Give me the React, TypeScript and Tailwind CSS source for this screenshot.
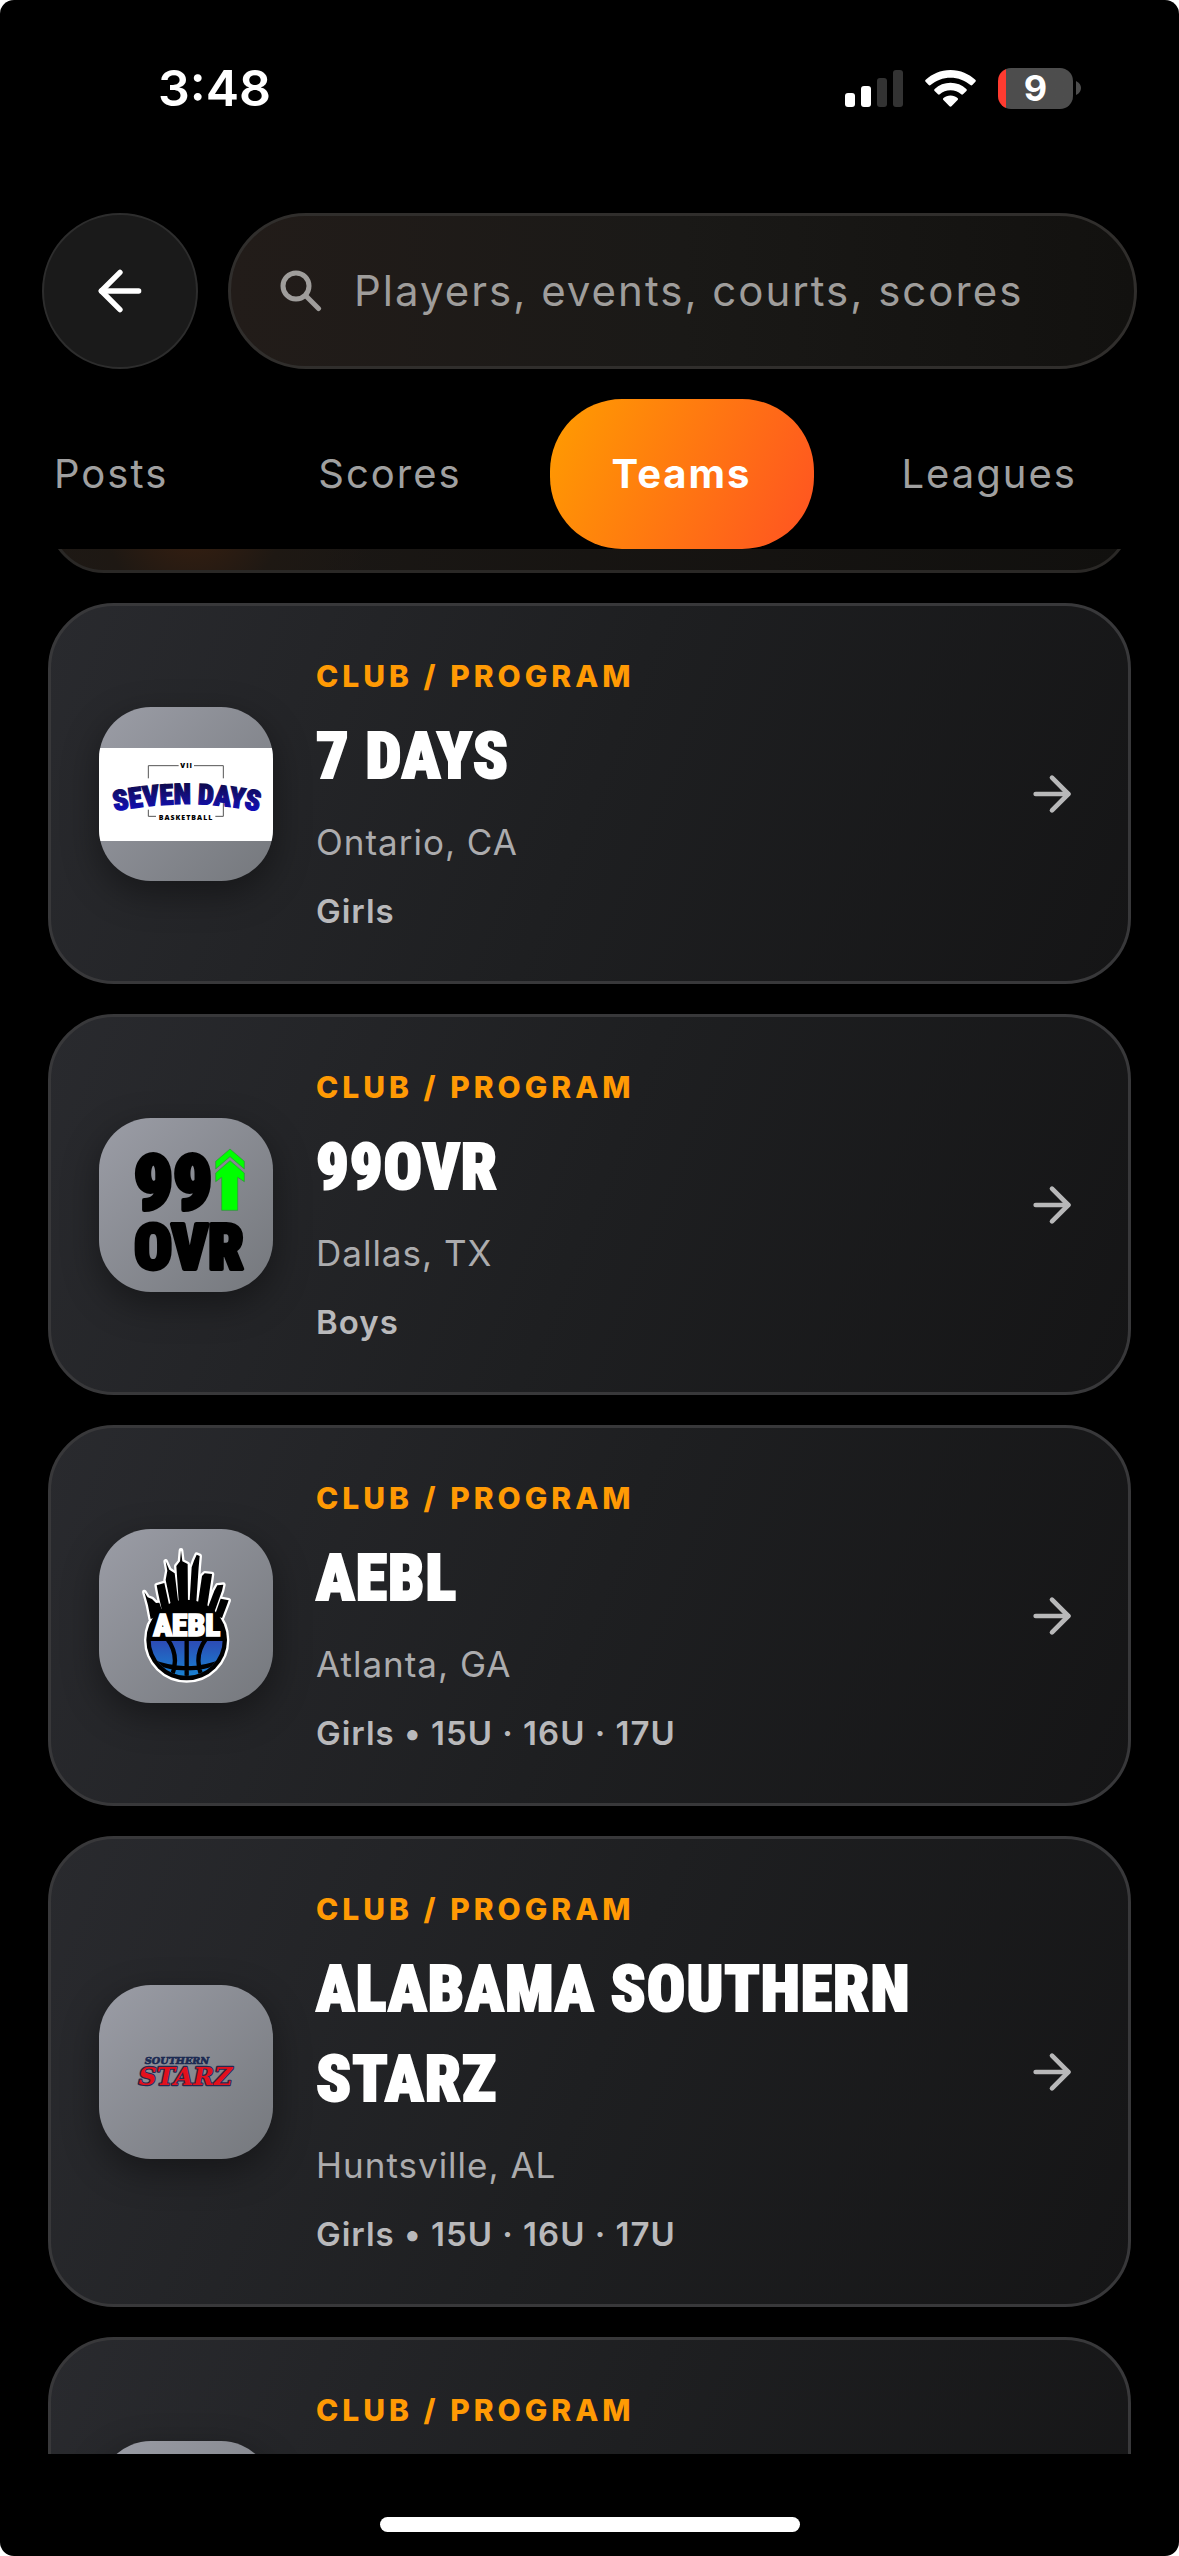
import type { ReactNode } from 'react';
import { ArrowLeft, ArrowRight } from 'lucide-react';

type Team = {
  name: string;
  location: string;
  detail: string;
  logo: ReactNode;
};

function SevenDaysLogo() {
  return (
    <svg viewBox="57 48 522 522" className="size-full" role="img" aria-label="Seven Days Basketball">
      <defs>
        <linearGradient id="seven-blue" x1="0" y1="0" x2="0" y2="1">
          <stop offset="0" stopColor="#0b0838" />
          <stop offset="0.5" stopColor="#140f86" />
          <stop offset="1" stopColor="#0c0cd6" />
        </linearGradient>
        <path id="seven-arc" d="M90 364 Q317 314 550 364" />
      </defs>
      <rect x="57" y="171" width="522" height="279" fill="#fff" />
      <path d="M296 224H205V262M342 224H430V262M205 356V376H228M406 376H430V336" fill="none" stroke="#555" strokeWidth="3" />
      <text x="320" y="232" textAnchor="middle" fontFamily="Open Sans, sans-serif" fontWeight="800" fontSize="21" letterSpacing="3">VII</text>
      <text fontFamily="Roboto Condensed, Roboto, sans-serif" fontWeight="900" fontSize="85" fill="url(#seven-blue)" stroke="url(#seven-blue)" strokeWidth="4">
        <textPath href="#seven-arc" startOffset="50%" textAnchor="middle">SEVEN DAYS</textPath>
      </text>
      <text x="318" y="387" textAnchor="middle" fontFamily="Open Sans, sans-serif" fontWeight="800" fontSize="21" letterSpacing="3">BASKETBALL</text>
    </svg>
  );
}

function NinetyNineLogo() {
  return (
    <svg viewBox="57 52 522 522" className="size-full" role="img" aria-label="99 OVR">
      <g fontFamily="Roboto Condensed, Roboto, sans-serif" fontWeight="900" fill="#000" stroke="#000" strokeWidth="12" strokeLinejoin="round">
        <text x="279" y="324" textAnchor="middle" fontSize="230">99</text>
        <text x="327" y="506" textAnchor="middle" fontSize="188">OVR</text>
      </g>
      <path d="M450 145L493 182V205L450 168L407 205V182Z" fill="#0f0" stroke="#2f8f3a" strokeWidth="2" />
      <path d="M450 180L493 217V243L473 230V329H425V230L407 243V217Z" fill="#0f0" stroke="#2f8f3a" strokeWidth="2" />
    </svg>
  );
}

function AeblLogo() {
  const shape = (
    <>
      <circle cx="320" cy="388" r="121" />
      <path d="M212 325L204 284L198 262L193 244L203 260L216 265L228 277L238 276L250 310Z" />
      <path d="M246 300L235 250L230 224L253 217L270 295Z" />
      <path d="M274 290L257 208L262 180L257 152L268 177L284 188L296 285Z" />
      <path d="M297 285L289 166L300 152L303 119L307 152L323 160L324 285Z" />
      <path d="M328 285L335 170L342 150L350 132L359 136L356 170L348 288Z" />
      <path d="M352 290L366 196L374 188L396 190L394 205L380 298Z" />
      <path d="M380 300L403 240L412 224L430 222L426 240L402 308Z" />
      <path d="M404 315L422 264L446 269L440 285L426 322Z" />
    </>
  );
  return (
    <svg viewBox="57 55 522 522" className="size-full" role="img" aria-label="AEBL">
      <defs>
        <linearGradient id="aebl-blue" x1="0" y1="0" x2="0" y2="1">
          <stop offset="0" stopColor="#2c4bb4" />
          <stop offset="1" stopColor="#168ad6" />
        </linearGradient>
        <clipPath id="aebl-ball">
          <circle cx="320" cy="388" r="108" />
        </clipPath>
      </defs>
      <g fill="#fff" stroke="#fff" strokeWidth="14" strokeLinejoin="round">{shape}</g>
      <g fill="#000">{shape}</g>
      <g clipPath="url(#aebl-ball)">
        <rect x="200" y="391" width="240" height="120" fill="url(#aebl-blue)" />
        <path d="M320 380V510M262 385Q302 438 272 505M378 385Q338 438 368 505M205 448Q320 498 435 448" fill="none" stroke="#000" strokeWidth="13" />
      </g>
      <text x="320" y="376" textAnchor="middle" fontFamily="Roboto Condensed, Roboto, sans-serif" fontWeight="900" fontSize="94" fill="#fff" stroke="#fff" strokeWidth="5">AEBL</text>
    </svg>
  );
}

function StarzLogo() {
  return (
    <svg viewBox="57 43 522 522" className="size-full" role="img" aria-label="Southern Starz">
      <g fontFamily="DejaVu Serif, serif" fontWeight="700" fontStyle="italic">
        <text x="291" y="280" textAnchor="middle" fontSize="29" fill="#1b2a52" stroke="#1b2a52" strokeWidth="2">SOUTHERN</text>
        <text x="316" y="344" textAnchor="middle" fontSize="75" fill="#e3101c" stroke="#26284f" strokeWidth="7" strokeLinejoin="round" paintOrder="stroke">STARZ</text>
      </g>
    </svg>
  );
}

const teams: Team[] = [
  { name: '7 DAYS', location: 'Ontario, CA', detail: 'Girls', logo: <SevenDaysLogo /> },
  { name: '99OVR', location: 'Dallas, TX', detail: 'Boys', logo: <NinetyNineLogo /> },
  { name: 'AEBL', location: 'Atlanta, GA', detail: 'Girls • 15U · 16U · 17U', logo: <AeblLogo /> },
  { name: 'ALABAMA SOUTHERN STARZ', location: 'Huntsville, AL', detail: 'Girls • 15U · 16U · 17U', logo: <StarzLogo /> },
  { name: '\u00a0', location: '\u00a0', detail: '\u00a0', logo: null },
];

const tabs = ['Posts', 'Scores', 'Teams', 'Leagues'];

function StatusBar() {
  return (
    <div className="flex h-44 shrink-0 items-center justify-between pl-[158px] pr-[98px]">
      <span className="text-[50px] font-semibold leading-none">3:48</span>
      <div className="flex items-center gap-[22px]">
        <svg width="58" height="38" viewBox="0 0 58 38" aria-hidden="true">
          <rect x="0" y="24" width="10" height="14" rx="3" fill="#fff" />
          <rect x="16" y="17" width="10" height="21" rx="3" fill="#fff" />
          <rect x="32" y="9" width="10" height="29" rx="3" fill="#333" />
          <rect x="48" y="1" width="10" height="37" rx="3" fill="#333" />
        </svg>
        <svg width="51" height="38" viewBox="0 0 51 38" aria-hidden="true" fill="#fff">
          <path d="M25.500 1C35.500 1 44 5 50.300 10.800C51 11.500 51 12.200 50.400 12.800L47.300 16C46.700 16.600 46 16.600 45.400 16C40 11.300 33 8.700 25.500 8.700S11 11.300 5.600 16C5 16.600 4.300 16.600 3.700 16L.6 12.800C0 12.200 0 11.500.7 10.800C7 5 15.500 1 25.500 1Z" />
          <path d="M25.500 13.800C31.500 13.800 37 16 41.300 19.900C42 20.500 42 21.300 41.400 21.900L38 25.200C37.400 25.800 36.800 25.800 36.200 25.200C33.300 22.800 29.600 21.300 25.500 21.300S17.700 22.800 14.800 25.200C14.200 25.800 13.600 25.800 13 25.200L9.600 21.900C9 21.300 9 20.500 9.700 19.900C14 16 19.500 13.800 25.500 13.800Z" />
          <path d="M25.500 26.600C28.300 26.600 30.700 27.500 32.500 29C33.200 29.600 33.200 30.300 32.600 30.900L26.500 37.200C25.900 37.800 25.100 37.800 24.500 37.200L18.400 30.900C17.800 30.300 17.800 29.600 18.500 29C20.300 27.500 22.700 26.600 25.500 26.600Z" />
        </svg>
        <div className="flex items-center gap-[3px]">
          <div className="flex h-[41px] w-[75px] items-center justify-center rounded-[13px] bg-linear-to-r from-[#ff3b30] from-10% to-[#4d4d4d] to-10% text-4xl font-bold leading-none">
            9
          </div>
          <svg width="5" height="14" viewBox="0 0 5 14" aria-hidden="true">
            <path d="M0 0Q5 2.500 5 7T0 14Z" fill="#4d4d4d" />
          </svg>
        </div>
      </div>
    </div>
  );
}

function SearchHeader() {
  return (
    <header className="flex shrink-0 items-center gap-[30px] px-[42px] pt-[37px]">
      <button
        type="button"
        aria-label="Back"
        className="flex size-[156px] shrink-0 items-center justify-center rounded-full border-2 border-[#2d2d2d] bg-[#1a1a1a]"
      >
        <ArrowLeft size={64} />
      </button>
      <label className="flex h-[156px] min-w-0 flex-1 items-center gap-8 rounded-full border-[3px] border-[#302e2c] bg-linear-to-r from-[#221c19] via-[#1a1917] to-[#12110f] px-[49px]">
        <svg width="42" height="42" viewBox="0 0 42 42" aria-hidden="true" fill="none" stroke="#9f9d9b" strokeWidth="5" strokeLinecap="round">
          <circle cx="16" cy="16" r="13" />
          <path d="M26 26L38.500 38.500" />
        </svg>
        <input
          type="search"
          aria-label="Search"
          placeholder="Players, events, courts, scores"
          className="min-w-0 flex-1 bg-transparent pb-0.5 text-[42px] tracking-[2px] outline-none placeholder:text-[#9f9d9b] placeholder:opacity-100"
        />
      </label>
    </header>
  );
}

function TeamCard({ team }: { team: Team }) {
  return (
    <a
      href="#team"
      className="flex shrink-0 items-center rounded-[66px] border-[3px] border-[#38383a] bg-linear-[112deg] from-[#292a2e] via-[#1e1f21] to-[#151516] p-12"
    >
      <div className="size-[174px] shrink-0 overflow-hidden rounded-[52px] bg-linear-to-br from-[#9b9da6] to-[#75787d] shadow-[0_12px_36px_rgba(0,0,0,0.4)]">
        {team.logo}
      </div>
      <div className="ml-[43px] min-w-0 flex-1 pr-10">
        <p className="text-[30px] font-extrabold leading-[44px] tracking-[4px] text-[#ff9a04]">CLUB / PROGRAM</p>
        <h2 className="mt-3.5 font-['Roboto_Condensed',Roboto,sans-serif] text-[64px] font-black leading-[90px] tracking-[1px] text-white [-webkit-text-stroke:2px_white]">
          {team.name}
        </h2>
        <p className="mt-3.5 text-[35px] leading-[53px] tracking-[1px] text-[#acacae]">{team.location}</p>
        <p className="mt-5 text-[33px] font-semibold leading-[44px] tracking-[1px] text-[#b9b9bb]">{team.detail}</p>
      </div>
      <ArrowRight size={56} className="shrink-0 text-[#b8b8b9]" aria-hidden="true" />
    </a>
  );
}

export default function App() {
  return (
    <div className="h-screen bg-white">
      <div className="flex h-full flex-col overflow-hidden rounded-[14px] bg-black font-['Inter',sans-serif] text-white">
        <StatusBar />
        <SearchHeader />
        <nav className="-ml-2 mt-[30px] flex shrink-0 gap-[26px] overflow-hidden" aria-label="Result type">
          {tabs.map((tab) => (
            <button
              key={tab}
              type="button"
              aria-pressed={tab === 'Teams'}
              className={
                tab === 'Teams'
                  ? 'h-[150px] shrink-0 rounded-[72px] bg-linear-[115deg] from-[#ff9d00] to-[#ff5222] px-[62px] text-[40px] font-bold tracking-[2px]'
                  : 'h-[150px] shrink-0 px-[62px] text-[40px] tracking-[2px] text-[#a0a0a0]'
              }
            >
              {tab}
            </button>
          ))}
        </nav>
        <main className="flex min-h-0 flex-1 flex-col gap-[30px] overflow-hidden px-12">
          <div className="flex h-6 shrink-0 flex-col justify-end overflow-hidden">
            <div className="h-40 shrink-0 rounded-[56px] border-[3px] border-[#2a2826] bg-[radial-gradient(circle_at_142px_100px,#3a2010_0px,#1e1813_90px,transparent_180px),linear-gradient(to_right,#1d1916,#11100e)]" />
          </div>
          {teams.map((team) => (
            <TeamCard key={team.name} team={team} />
          ))}
        </main>
        <footer className="flex h-[102px] shrink-0 items-end justify-center pb-6">
          <div className="h-[15px] w-[420px] rounded-full bg-white" />
        </footer>
      </div>
    </div>
  );
}
